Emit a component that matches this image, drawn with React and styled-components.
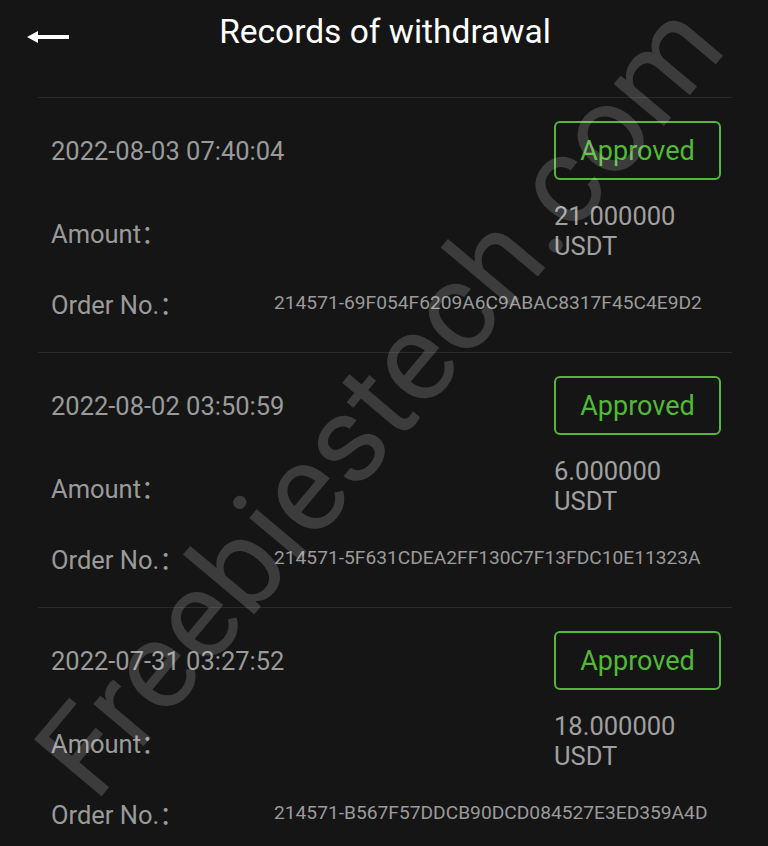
import React from 'react';
import styled, { createGlobalStyle } from 'styled-components';

const GlobalStyle = createGlobalStyle`
  html, body {
    margin: 0;
    padding: 0;
    background: #151515;
  }
  * { box-sizing: border-box; }
`

const Page = styled.div`
  position: relative;
  width: 768px;
  height: 846px;
  overflow: hidden;
  background: #151515;
  font-family: Roboto, "Noto Sans CJK SC", sans-serif;
`
const Header = styled.div`
  display: grid;
  grid-template-columns: 1fr auto 1fr;
  align-items: center;
  height: 64px;
  padding: 0 27px;
`
const BackButton = styled.div`
  display: flex;
  align-items: center;
  margin-top: 10px;
  color: #fff;
`
const Title = styled.div`
  font-size: 33.5px;
  color: #fff;
  line-height: 1;
  margin-left: 2px;
`
const List = styled.div`
  margin: 33px 36px 0 38px;
`
const Card = styled.div`
  border-top: 1px solid #2a2a2a;
  padding: 23px 11px 35px 13px;
`
const TopRow = styled.div`
  display: flex;
  justify-content: space-between;
  align-items: center;
`
const DateText = styled.div`
  font-size: 25.5px;
  color: #9a9a9a;
`
const Badge = styled.div`
  width: 167px;
  height: 59px;
  border: 2px solid ${(props) => props.color};
  border-radius: 6px;
  display: flex;
  align-items: center;
  justify-content: center;
  font-size: 27px;
  color: ${(props) => props.color};
`
const AmountRow = styled.div`
  display: flex;
  justify-content: space-between;
  align-items: center;
  margin-top: 21px;
`
const Label = styled.div`
  font-size: 25.5px;
  color: #9a9a9a;
  width: ${(props) => props.width || 'auto'};
  flex-shrink: 0;
`
const AmountValue = styled.div`
  width: 167px;
  font-size: 25.5px;
  line-height: 30px;
  color: #a0a0a0;
`
const OrderRow = styled.div`
  display: flex;
  align-items: center;
  height: 30px;
  margin-top: 26px;
`
const OrderValue = styled.div`
  font-size: 19.2px;
  color: #9a9a9a;
  white-space: nowrap;
`
const Watermark = styled.div`
  position: absolute;
  left: 95px;
  top: 700px;
  font-family: Roboto, sans-serif;
  font-size: 124px;
  line-height: 1;
  white-space: nowrap;
  color: rgba(255, 255, 255, 0.17);
  transform-origin: 0 104px;
  transform: rotate(-50deg);
  pointer-events: none;
`

const records = [
  {time: '2022-08-03 07:40:04', amount: '21.000000', order: '214571-69F054F6209A6C9ABAC8317F45C4E9D2'},
  {time: '2022-08-02 03:50:59', amount: '6.000000', order: '214571-5F631CDEA2FF130C7F13FDC10E11323A'},
  {time: '2022-07-31 03:27:52', amount: '18.000000', order: '214571-B567F57DDCB90DCD084527E3ED359A4D'},
]

const BackArrow = () => (
  <svg width="42" height="14" viewBox="0 0 42 14">
    <path d="M0 7 L11 1 L11 13 Z" fill="#fff"/>
    <rect x="9" y="5" width="33" height="4" fill="#fff"/>
  </svg>
)

export default function App() {
  return (
    <Page>
      <GlobalStyle/>
      <Header>
        <BackButton><BackArrow/></BackButton>
        <Title>Records of withdrawal</Title>
        <div/>
      </Header>
      <List>
        {records.map((record) => {
          return (
            <Card key={record.order}>
              <TopRow>
                <DateText>{record.time}</DateText>
                <Badge color={'#52b936'}>Approved</Badge>
              </TopRow>
              <AmountRow>
                <Label>Amount：</Label>
                <AmountValue>{record.amount}<br/>USDT</AmountValue>
              </AmountRow>
              <OrderRow>
                <Label width={'223px'}>Order No.：</Label>
                <OrderValue>{record.order}</OrderValue>
              </OrderRow>
            </Card>
          )
        })}
      </List>
      <Watermark>Freebiestech.com</Watermark>
    </Page>
  );
}
